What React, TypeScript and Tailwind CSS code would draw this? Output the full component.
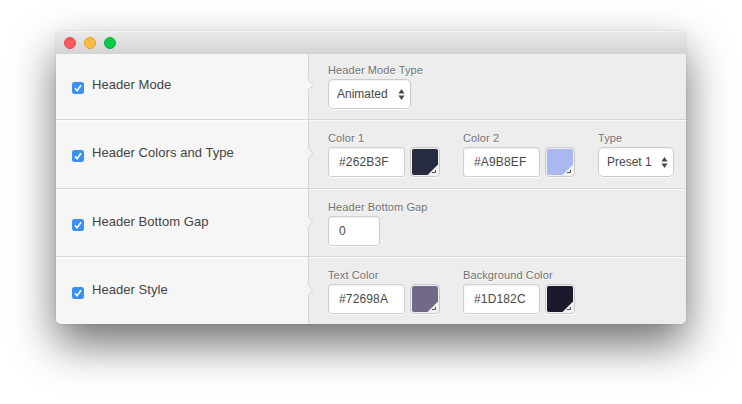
import type { ReactNode } from 'react';

function Checkbox() {
  return (
    <svg className="h-3 w-3 shrink-0" viewBox="0 0 12 12">
      <rect width="12" height="12" rx="2.5" fill="#3b8ff5" />
      <path d="M3 6.4 L5.1 8.7 L9 3.3" fill="none" stroke="#fff" strokeWidth="1.6" />
    </svg>
  );
}

function Field({ label, width, children }: { label: string; width: string; children: ReactNode }) {
  return (
    <div className={`shrink-0 ${width}`}>
      <div className="h-4 whitespace-nowrap text-[11px] leading-[14px] tracking-[0.1px] text-[#707070] [text-shadow:0_1px_0_#fff]">
        {label}
      </div>
      <div className="flex gap-[5px]">{children}</div>
    </div>
  );
}

function TextInput({ value, width }: { value: string; width: string }) {
  return (
    <div
      className={`h-[30px] rounded-[3px] border border-[#cfcfcf] bg-white pl-[10px] text-[12px] leading-[28px] tracking-[0.15px] text-[#484848] shadow-[inset_0_1px_2px_rgba(0,0,0,0.08),0_1px_0_#fafafa] ${width}`}
    >
      {value}
    </div>
  );
}

function Select({ value, width }: { value: string; width: string }) {
  return (
    <div
      className={`flex h-[30px] items-center justify-between rounded-[5px] border border-[#cacaca] bg-white pl-2 pr-[5px] text-[12px] leading-[28px] text-[#484848] shadow-[inset_0_1px_1px_rgba(0,0,0,0.06),0_1px_0_#fafafa] ${width}`}
    >
      <span>{value}</span>
      <svg className="h-[11px] w-[7px]" viewBox="0 0 7 11" fill="#484848">
        <path d="M3.5 0 L6.6 4.5 H0.4 Z M0.4 6.5 H6.6 L3.5 11 Z" />
      </svg>
    </div>
  );
}

function Swatch({ color }: { color: string }) {
  return (
    <div className="h-[30px] w-[30px] rounded-[4px] border border-[#c8c8c8] bg-[#f1f1f1] p-px shadow-[0_1px_0_#fafafa]">
      <svg className="h-[26px] w-[26px]" viewBox="0 0 26 26">
        <path d="M2 0 H24 Q26 0 26 2 V15.5 L15.5 26 H2 Q0 26 0 24 V2 Q0 0 2 0 Z" fill={color} />
        <path d="M23.5 21 V23.5 H20" fill="none" stroke="#4a4a4a" />
      </svg>
    </div>
  );
}

function Row({ title, height, first, last, children }: { title: string; height: string; first?: boolean; last?: boolean; children: ReactNode }) {
  const line = last ? '' : 'border-b border-b-[#d6d6d6]';
  const top = first ? '-mt-0.5' : '';
  return (
    <div className={`flex ${height} ${line} ${top}`}>
      <div className="relative flex w-[253px] shrink-0 gap-2 border-r border-[#d8d8d8] bg-[#f6f6f6] pl-4 pt-[26px] shadow-[inset_0_1px_0_#fcfcfc]">
        <div className="pt-1">
          <Checkbox />
        </div>
        <span className="h-4 whitespace-nowrap text-[13px] leading-[14px] tracking-[0.05px] text-[#444]">{title}</span>
        <svg className="absolute -right-[6px] top-[27px] h-3 w-[7px]" viewBox="0 0 7 12">
          <path d="M0 0 H1 L6 6 L1 12 H0 Z" fill="#f6f6f6" />
          <path d="M0.5 0 L5.8 6 L0.5 12" fill="none" stroke="#d3d3d3" />
        </svg>
      </div>
      <div className="flex grow bg-[#ededed] pl-[19px] pt-[11px] shadow-[inset_0_1px_0_#fcfcfc]">{children}</div>
    </div>
  );
}

export default function App() {
  return (
    <div className="h-[404px] w-[742px] overflow-hidden bg-white pl-14 pt-[31px] font-['Liberation_Sans',Arial,sans-serif]">
      <div className="w-[630px] rounded-[5px] shadow-[0_0_1px_rgba(0,0,0,0.5),0_20px_44px_rgba(0,0,0,0.56)]">
        <div className="h-[293px] overflow-hidden rounded-[5px]">
          <div className="relative z-10 flex h-[23px] items-center gap-2 bg-linear-to-b from-[#ebebeb] to-[#d3d3d3] pl-2 shadow-[inset_0_1px_0_#f5f5f5]">
            <span className="h-3 w-3 rounded-full border border-[#e2494b] bg-[#fc5b5d]" />
            <span className="h-3 w-3 rounded-full border border-[#dfa036] bg-[#fdbc40]" />
            <span className="h-3 w-3 rounded-full border border-[#08b03c] bg-[#05cc47]" />
          </div>
          <Row title="Header Mode" height="h-[68px]" first>
            <Field label="Header Mode Type" width="w-[135px]">
              <Select value="Animated" width="w-[83px]" />
            </Field>
          </Row>
          <Row title="Header Colors and Type" height="h-[69px]">
            <Field label="Color 1" width="w-[135px]">
              <TextInput value="#262B3F" width="w-[77px]" />
              <Swatch color="#262b3f" />
            </Field>
            <Field label="Color 2" width="w-[135px]">
              <TextInput value="#A9B8EF" width="w-[77px]" />
              <Swatch color="#a9b8ef" />
            </Field>
            <Field label="Type" width="w-[76px]">
              <Select value="Preset 1" width="w-[76px]" />
            </Field>
          </Row>
          <Row title="Header Bottom Gap" height="h-[68px]">
            <Field label="Header Bottom Gap" width="w-[135px]">
              <TextInput value="0" width="w-[52px]" />
            </Field>
          </Row>
          <Row title="Header Style" height="h-[67px]" last>
            <Field label="Text Color" width="w-[135px]">
              <TextInput value="#72698A" width="w-[77px]" />
              <Swatch color="#72698a" />
            </Field>
            <Field label="Background Color" width="w-[135px]">
              <TextInput value="#1D182C" width="w-[77px]" />
              <Swatch color="#1d182c" />
            </Field>
          </Row>
        </div>
      </div>
    </div>
  );
}
